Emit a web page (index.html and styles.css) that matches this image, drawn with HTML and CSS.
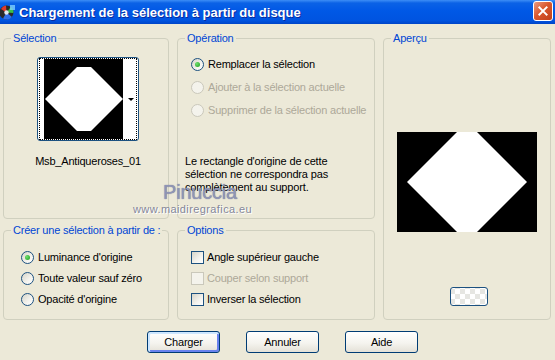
FILE: index.html
```html
<!DOCTYPE html>
<html lang="fr">
<head>
  <meta charset="UTF-8">
  <title>Chargement de la sélection à partir du disque</title>
  <link rel="stylesheet" href="styles.css">
</head>
<body>
  <div class="window">
    <div class="titlebar">
      <svg class="app-icon" viewBox="0 0 15 15">
        <circle cx="6.5" cy="7.5" r="7" fill="#2a2a2a"/>
        <path d="M6.5 7.5 L1 4 A7 7 0 0 1 6 0.6 Z" fill="#e03b2a"/>
        <path d="M6.5 7.5 L11 1.8 A7 7 0 0 1 13.4 8 Z" fill="#38c04a"/>
        <path d="M6.5 7.5 L12 12 A7 7 0 0 1 3 13.6 Z" fill="#2f6fe8"/>
        <circle cx="6.5" cy="7.5" r="2.2" fill="#dfe6ee"/>
        <rect x="10" y="0" width="5" height="5" fill="#7fd0ff" opacity="0.8"/>
      </svg>
      <span class="title">Chargement de la sélection à partir du disque</span>
      <button class="close" aria-label="Fermer">
        <svg viewBox="0 0 20 20"><path d="M6 6 L14 14 M14 6 L6 14" stroke="#fff" stroke-width="2.2" stroke-linecap="square"/></svg>
      </button>
    </div>

    <div class="client">
      <div class="groups">
        <section class="group">
          <span class="group-title">Sélection</span>
          <div class="thumb-picker">
            <div class="thumb-focus">
              <svg class="thumb" viewBox="0 0 79 80">
                <rect width="79" height="80" fill="#000"/>
                <polygon points="33,8 47,8 79,40 47,72 33,72 1,40" fill="#fff"/>
              </svg>
              <div class="thumb-arrow"><span></span></div>
            </div>
          </div>
          <div class="thumb-name">Msb_Antiqueroses_01</div>
        </section>

        <section class="group">
          <span class="group-title">Opération</span>
          <div class="option-list operation-list">
            <label class="option"><span class="radio checked"></span>Remplacer la sélection</label>
            <label class="option disabled"><span class="radio"></span>Ajouter à la sélection actuelle</label>
            <label class="option disabled"><span class="radio"></span>Supprimer de la sélection actuelle</label>
          </div>
          <p class="note">Le rectangle d'origine de cette<br>sélection ne correspondra pas<br>complètement au support.</p>
        </section>

        <section class="group preview-group">
          <span class="group-title">Aperçu</span>
          <svg class="preview" viewBox="0 0 140 100">
            <rect width="140" height="100" fill="#000"/>
            <polygon points="70,-10 130,50 70,110 10,50" fill="#fff"/>
          </svg>
          <button class="pattern-btn" aria-label="Arrière-plan"></button>
        </section>

        <section class="group">
          <span class="group-title">Créer une sélection à partir de :</span>
          <div class="option-list create-list">
            <label class="option"><span class="radio checked"></span>Luminance d'origine</label>
            <label class="option"><span class="radio"></span>Toute valeur sauf zéro</label>
            <label class="option"><span class="radio"></span>Opacité d'origine</label>
          </div>
        </section>

        <section class="group">
          <span class="group-title">Options</span>
          <div class="option-list check-list">
            <label class="option"><span class="checkbox"></span>Angle supérieur gauche</label>
            <label class="option disabled"><span class="checkbox"></span>Couper selon support</label>
            <label class="option"><span class="checkbox"></span>Inverser la sélection</label>
          </div>
        </section>
      </div>

      <div class="actions">
        <button class="btn default">Charger</button>
        <button class="btn">Annuler</button>
        <button class="btn">Aide</button>
      </div>
    </div>

    <div class="watermark">
      <div class="wm-name">Pinuccia</div>
      <div class="wm-url">www.maidiregrafica.eu</div>
    </div>
  </div>
</body>
</html>
```

FILE: styles.css
```css
* {
  box-sizing: border-box;
}

body {
  margin: 0;
  background-color: #ece9d8;
  font-family: "Liberation Sans", Arial, sans-serif;
  font-size: 11px;
  letter-spacing: -0.2px;
  color: #000;
}

.window {
  position: relative;
  width: 555px;
  height: 360px;
}

/* barre de titre */
.titlebar {
  display: flex;
  align-items: center;
  height: 24px;
  padding-right: 2px;
  background: linear-gradient(#3d8ef6 0, #0b62e6 3px, #0058e6 45%, #0054e0 85%, #0045c8 100%);
  color: #fff;
}

.app-icon {
  flex: none;
  width: 15px;
  height: 15px;
  margin-right: 4px;
}

.title {
  flex: 1;
  font-size: 13px;
  font-weight: bold;
  letter-spacing: 0;
  text-shadow: 1px 1px 0 #0a2b9e;
}

.close {
  align-self: flex-start;
  width: 20px;
  height: 20px;
  margin-top: 1px;
  padding: 0;
  border: 1px solid #fff;
  border-radius: 3px;
  background: linear-gradient(135deg, #eb9b82 0%, #d9582f 45%, #c2401b 100%);
}

.close svg {
  display: block;
  width: 18px;
  height: 18px;
}

/* zone client */
.client {
  padding: 14px 4px 0 3px;
}

.groups {
  display: grid;
  grid-template-columns: 166px 198px 168px;
  grid-template-rows: 181px 90px;
  column-gap: 8px;
  row-gap: 11px;
}

.group {
  border: 1px solid #d0d0bf;
  border-radius: 4px;
}

.group-title {
  display: block;
  width: fit-content;
  margin: -7px 0 0 7px;
  padding: 0 2px;
  line-height: 13px;
  background-color: #ece9d8;
  color: #0046d5;
}

/* Sélection */
.thumb-picker {
  display: flex;
  width: 102px;
  height: 84px;
  margin: 12px 0 0 33px;
  padding: 0 1px;
  border: 1px solid #1c5180;
  border-radius: 3px;
  background-color: #fff;
}

.thumb-focus {
  display: flex;
  flex: 1;
  padding-left: 4px;
  border: 1px dotted #000;
}

.thumb {
  display: block;
  width: 79px;
  height: 80px;
}

.thumb-arrow {
  display: flex;
  flex: 1;
  align-items: center;
  justify-content: flex-end;
  padding-right: 2px;
}

.thumb-arrow span {
  border: 3px solid transparent;
  border-top-color: #000;
  border-bottom: 0;
}

.thumb-name {
  margin-top: 14px;
  padding-left: 4px;
  line-height: 13px;
  text-align: center;
}

/* listes d'options */
.option-list {
  display: flex;
  flex-direction: column;
  gap: 8px;
  margin-top: 14px;
  padding-left: 13px;
}

.operation-list {
  gap: 10px;
  margin-top: 13px;
}

.create-list {
  padding-left: 17px;
}

.option {
  display: flex;
  align-items: center;
  gap: 4px;
  line-height: 13px;
  white-space: nowrap;
}

.check-list .option {
  gap: 3px;
}

.option.disabled {
  color: #aca899;
}

.radio {
  display: flex;
  flex: none;
  align-items: center;
  justify-content: center;
  width: 13px;
  height: 13px;
  border: 1px solid #1c5180;
  border-radius: 50%;
  background: linear-gradient(135deg, #d6d4c8 0%, #f4f3ee 60%, #fff 100%);
}

.radio.checked::after {
  content: "";
  width: 5px;
  height: 5px;
  border-radius: 50%;
  background: radial-gradient(circle at 35% 35%, #6ee06e, #1f9a1f);
}

.checkbox {
  flex: none;
  width: 13px;
  height: 13px;
  border: 1px solid #1c5180;
  background: linear-gradient(135deg, #d6d4c8 0%, #f4f3ee 60%, #fff 100%);
}

.option.disabled .radio,
.option.disabled .checkbox {
  border-color: #cac8bb;
  background: #f4f3ec;
}

.note {
  margin: 38px 0 0 7px;
  line-height: 13px;
  letter-spacing: -0.15px;
}

/* Aperçu */
.preview-group {
  display: flex;
  flex-direction: column;
  align-items: center;
  grid-column: 3;
  grid-row: 1 / span 2;
}

.preview-group .group-title {
  align-self: flex-start;
}

.preview {
  display: block;
  width: 140px;
  height: 100px;
  margin-top: 87px;
}

.pattern-btn {
  width: 38px;
  height: 19px;
  margin: 55px 0 0 4px;
  padding: 0;
  border: 1px solid #1c5180;
  border-radius: 3px;
  background-color: #fff;
  background-image: conic-gradient(#e6e6e2 25%, #fff 0 50%, #e6e6e2 0 75%, #fff 0);
  background-size: 10px 10px;
  background-position: 4px 1px;
}

/* boutons */
.actions {
  display: flex;
  gap: 26px;
  margin: 11px 0 0 144px;
}

.btn {
  width: 73px;
  height: 22px;
  padding: 0;
  border: 1px solid #003c74;
  border-radius: 3px;
  background: linear-gradient(#fff 0%, #f5f4ef 55%, #e4e1d7 100%);
  font: inherit;
  letter-spacing: inherit;
  color: #000;
}

.btn.default {
  box-shadow: inset 1px 1px 0 1px #cee7ff, inset -1px -1px 0 1px #6982ee;
}

/* filigrane */
.watermark {
  position: absolute;
  left: 133px;
  top: 181px;
  pointer-events: none;
}

.wm-name {
  margin-left: 30px;
  font-size: 20px;
  line-height: 22px;
  letter-spacing: -0.2px;
  color: rgba(150, 156, 190, 0.85);
  text-shadow: 0 0 1px #5c6180;
}

.wm-url {
  font-size: 11px;
  line-height: 13px;
  letter-spacing: 0.4px;
  color: rgba(110, 114, 140, 0.85);
  text-shadow: 1px 1px 0 #fff;
}
```
